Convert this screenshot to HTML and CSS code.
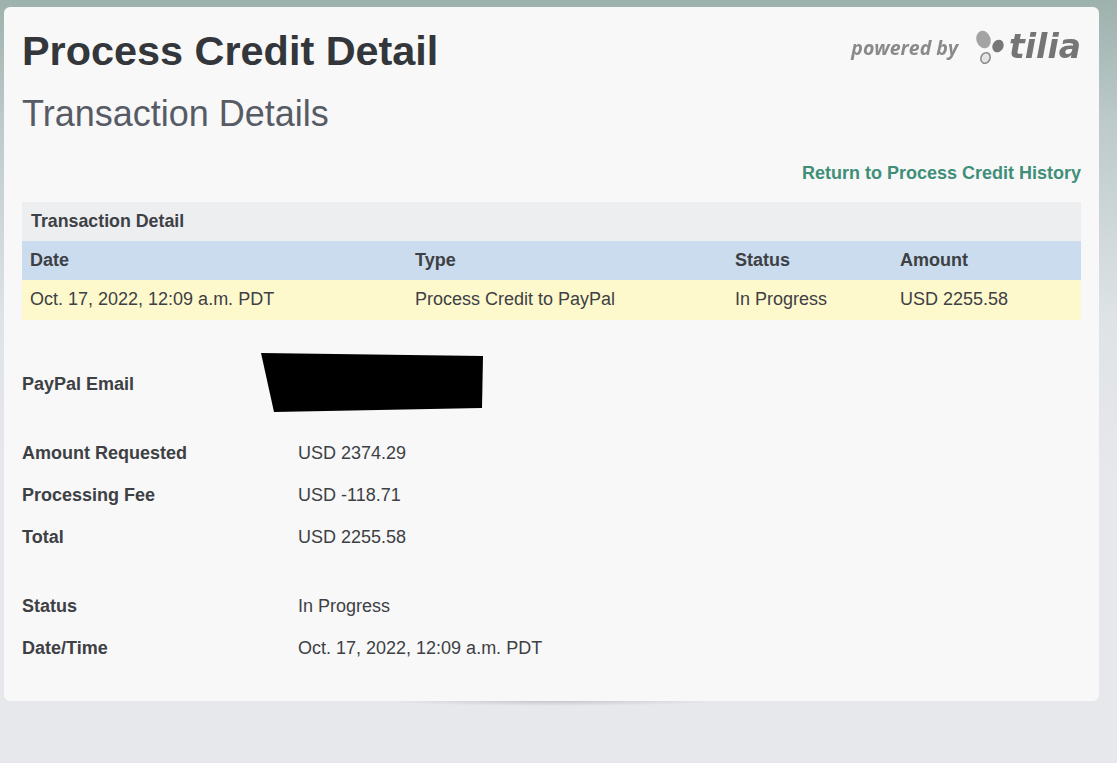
FILE: index.html
```html
<!DOCTYPE html>
<html lang="en">
<head>
  <meta charset="UTF-8">
  <meta name="viewport" content="width=device-width, initial-scale=1.0">
  <title>Process Credit Detail</title>
  <link rel="stylesheet" href="styles.css">
</head>
<body>

  <div class="card">
    <div class="top">
      <h1>Process Credit Detail</h1>
      <div class="powered">
        <span class="powered-by">powered by</span>
        <svg class="tilia-mark" width="30" height="36" viewBox="0 0 30 36">
          <ellipse cx="8.5" cy="10.5" rx="7" ry="9" fill="#a3a3a3" transform="rotate(-18 8.5 10.5)"/>
          <ellipse cx="23" cy="17" rx="5.5" ry="6.5" fill="#777" transform="rotate(25 23 17)"/>
          <ellipse cx="10.5" cy="29" rx="4.5" ry="5.5" fill="#e4e4e4" stroke="#8a8a8a" stroke-width="1.5" transform="rotate(25 10.5 29)"/>
        </svg>
        <span class="tilia">tilia</span>
      </div>
    </div>
    <h2>Transaction Details</h2>

    <div class="return-row">
      <a class="return-link" href="#">Return to Process Credit History</a>
    </div>

    <table class="detail-table">
      <colgroup>
        <col class="col-date">
        <col class="col-type">
        <col class="col-status">
        <col>
      </colgroup>
      <tr class="title-row"><th colspan="4">Transaction Detail</th></tr>
      <tr class="head-row">
        <th>Date</th>
        <th>Type</th>
        <th>Status</th>
        <th>Amount</th>
      </tr>
      <tr class="data-row">
        <td>Oct. 17, 2022, 12:09 a.m. PDT</td>
        <td>Process Credit to PayPal</td>
        <td>In Progress</td>
        <td>USD 2255.58</td>
      </tr>
    </table>

    <div class="info email-row">
      <div class="info-label">PayPal Email</div>
      <svg class="redacted" width="224" height="60" viewBox="0 0 224 60">
        <polygon points="0,0 222,3 221,55 13,59" fill="#000"/>
      </svg>
    </div>

    <div class="group">
      <div class="info"><div class="info-label">Amount Requested</div><div>USD 2374.29</div></div>
      <div class="info"><div class="info-label">Processing Fee</div><div>USD -118.71</div></div>
      <div class="info"><div class="info-label">Total</div><div>USD 2255.58</div></div>
    </div>

    <div class="group group-last">
      <div class="info"><div class="info-label">Status</div><div>In Progress</div></div>
      <div class="info"><div class="info-label">Date/Time</div><div>Oct. 17, 2022, 12:09 a.m. PDT</div></div>
    </div>
  </div>
  <div class="card-shadow"></div>

</body>
</html>
```

FILE: styles.css
```css
html, body {
  margin: 0;
  padding: 0;
}
body {
  min-height: 763px;
  font-family: "Liberation Sans", Arial, sans-serif;
  font-size: 18px;
  color: #3d4044;
  background: #e7e8ec linear-gradient(to bottom, #9db1ad 0, #bccac9 120px, #dfe3e6 320px, #e7e8ec 480px) no-repeat;
  overflow: hidden;
}
.card {
  box-sizing: border-box;
  width: 1095px;
  height: 694px;
  margin: 7px 0 0 4px;
  padding: 18px 18px 0;
  background: #f8f8f8;
  border-radius: 6px;
}
.card-shadow {
  width: 330px;
  height: 5px;
  margin-left: 387px;
  background: radial-gradient(ellipse 50% 100% at 50% 0, rgba(0, 0, 0, 0.14), rgba(0, 0, 0, 0));
}
.top {
  display: flex;
  justify-content: space-between;
  align-items: flex-start;
}
h1 {
  margin: 1px 0 0;
  font-size: 41.4px;
  line-height: 50px;
  font-weight: 700;
  color: #33363a;
}
h2 {
  margin: 13px 0 0;
  font-size: 36px;
  line-height: 50px;
  font-weight: 400;
  color: #565b65;
}
.powered {
  display: flex;
  align-items: center;
  height: 44px;
  filter: blur(0.4px);
}
.powered-by {
  font-family: "Open Sans", sans-serif;
  font-size: 19.5px;
  font-weight: 700;
  font-style: italic;
  color: #8a8a8a;
  margin-right: 17px;
}
.tilia-mark {
  margin-right: 4px;
}
.tilia {
  font-family: "DejaVu Sans", sans-serif;
  font-size: 33px;
  line-height: 36px;
  font-weight: 700;
  font-style: italic;
  color: #757575;
}
.return-row {
  margin-top: 23px;
  text-align: right;
}
.return-link {
  font-size: 18px;
  line-height: 22px;
  font-weight: 700;
  color: #3f8f78;
  text-decoration: none;
}
.detail-table {
  width: 100%;
  margin-top: 18px;
  border-collapse: collapse;
  table-layout: fixed;
}
.detail-table th, .detail-table td {
  box-sizing: border-box;
  padding: 0 8px;
  text-align: left;
}
.title-row th {
  height: 39px;
  background: #edeef0;
  padding-left: 9px;
  font-size: 17.8px;
}
.head-row th {
  height: 39px;
  background: #cbdcee;
}
.data-row td {
  height: 40px;
  padding-bottom: 2px;
  background: #fef9cd;
}
.col-date { width: 385px; }
.col-type { width: 320px; }
.col-status { width: 165px; }
.info {
  display: flex;
  align-items: center;
  height: 42px;
}
.info-label {
  width: 276px;
  flex: none;
  font-weight: 700;
}
.email-row {
  height: 59px;
  margin-top: 33px;
}
.email-row .info-label {
  margin-top: 4px;
}
.redacted {
  margin-left: -37px;
  display: block;
}
.group {
  margin-top: 20px;
}
.group-last {
  margin-top: 27px;
}
```
